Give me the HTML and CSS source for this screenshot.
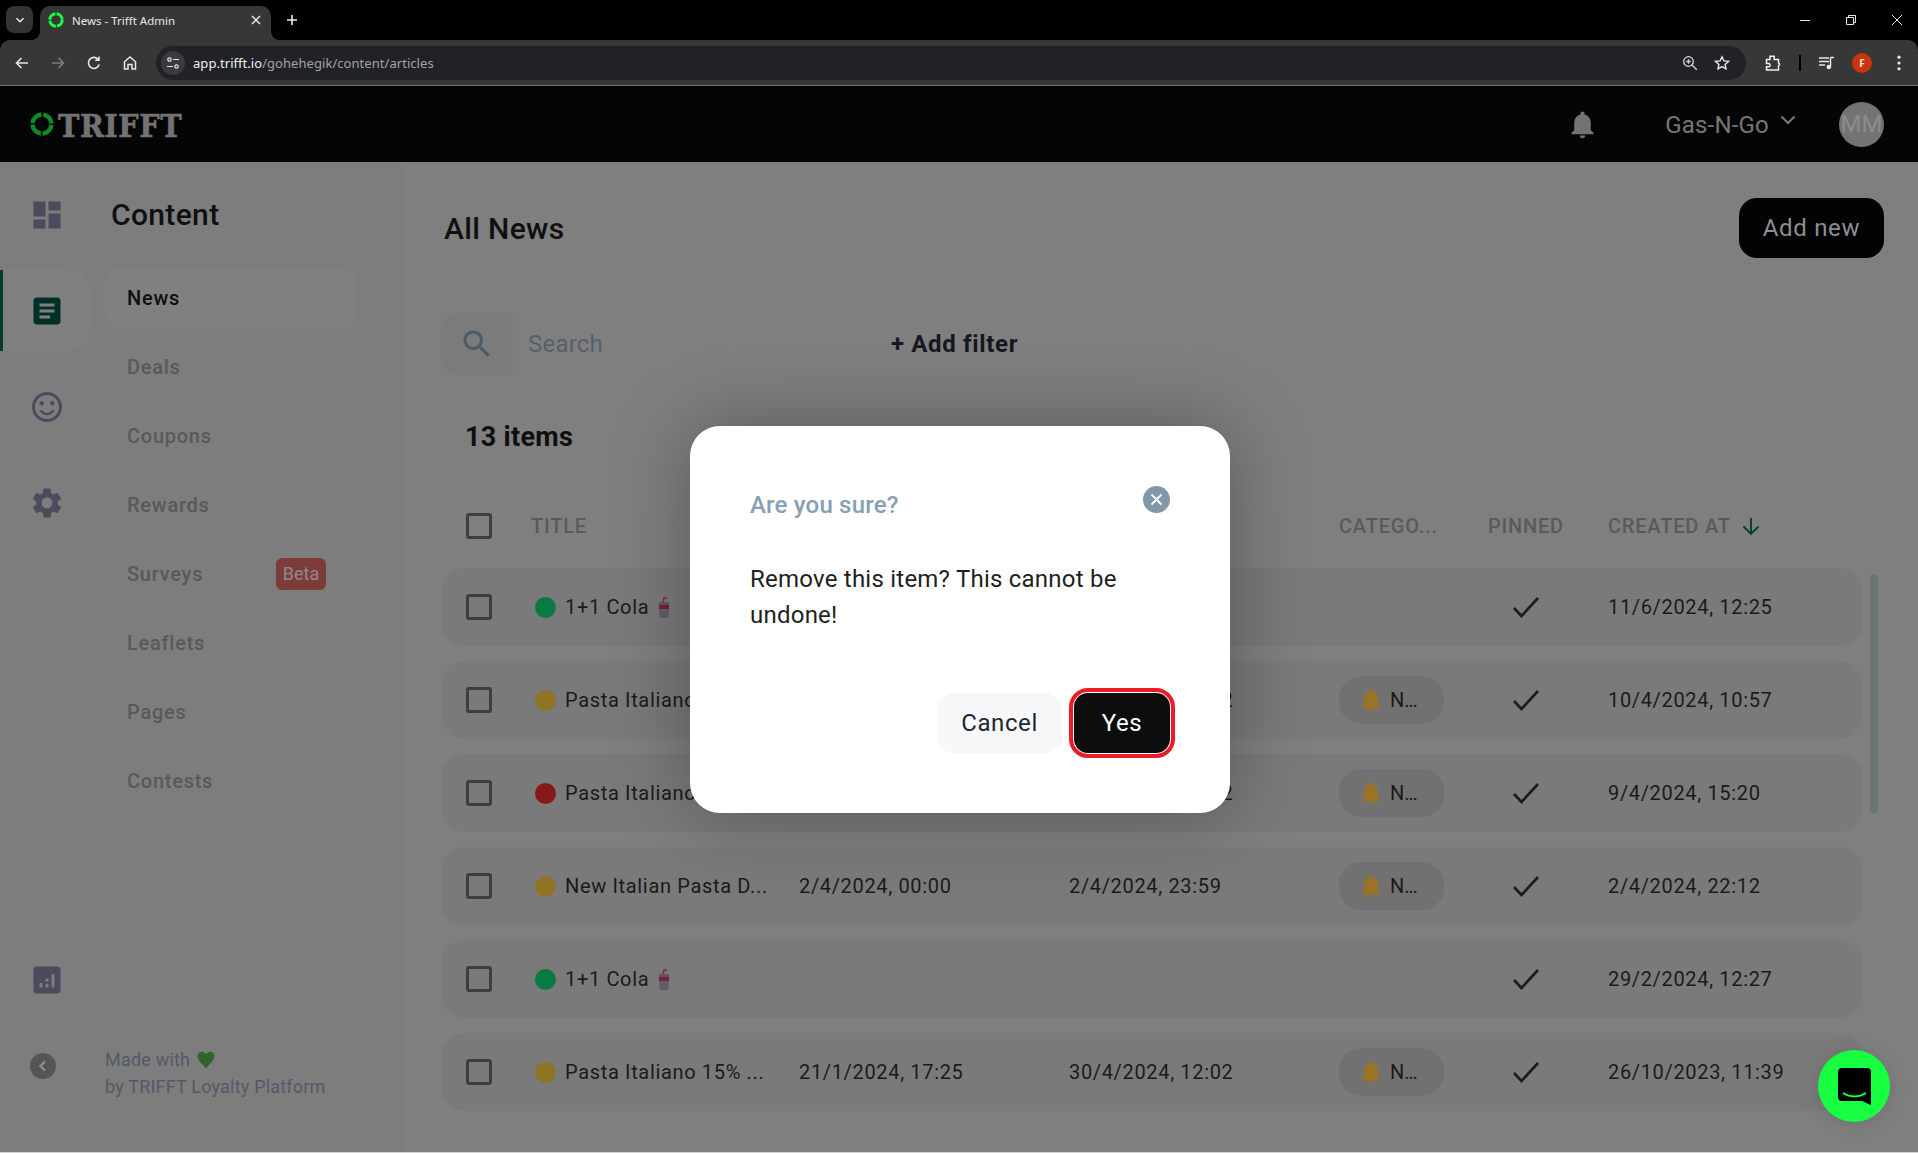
FILE: index.html
```html
<!DOCTYPE html>
<html lang="en">
<head>
<meta charset="utf-8">
<title>News - Trifft Admin</title>
<link rel="stylesheet" href="styles.css">
</head>
<body>
<div class="browser">
  <div class="tabstrip">
    <button class="tabsearch"><svg width="12" height="12" viewBox="0 0 12 12"><path d="M2.5 4.2 6 7.7l3.5-3.5" fill="none" stroke="#e8e8e8" stroke-width="1.6"/></svg></button>
    <div class="tab">
      <svg class="favicon" width="16" height="16" viewBox="0 0 16 16"><circle cx="8" cy="8" r="6.2" fill="none" stroke="#19ff41" stroke-width="3" stroke-dasharray="8.5 1.2"/></svg>
      <span class="tabtitle">News - Trifft Admin</span>
      <svg class="tabclose" width="10" height="10" viewBox="0 0 10 10"><path d="M1 1l8 8M9 1l-8 8" stroke="#e8e8e8" stroke-width="1.5"/></svg>
    </div>
    <svg class="newtab" width="12" height="12" viewBox="0 0 12 12"><path d="M6 1v10M1 6h10" stroke="#f0f0f0" stroke-width="1.6"/></svg>
    <div class="winctrls">
      <svg width="12" height="12" viewBox="0 0 12 12"><path d="M1 6.5h10" stroke="#e8e8e8"/></svg>
      <svg width="12" height="12" viewBox="0 0 12 12"><path d="M1.5 3.5h7v7h-7zM3.5 3.5v-2h7v7h-2" fill="none" stroke="#e8e8e8"/></svg>
      <svg width="12" height="12" viewBox="0 0 12 12"><path d="M1 1l10 10M11 1L1 11" stroke="#e8e8e8"/></svg>
    </div>
  </div>
  <div class="toolbar">
    <svg class="tbicon" width="16" height="16" viewBox="0 0 16 16"><path d="M14 8H2.5M7.5 3l-5 5 5 5" fill="none" stroke="#e8e8e8" stroke-width="1.6"/></svg>
    <svg class="tbicon" width="16" height="16" viewBox="0 0 16 16"><path d="M2 8h11.5M8.5 3l5 5-5 5" fill="none" stroke="#7c7c7c" stroke-width="1.6"/></svg>
    <svg class="tbicon" width="16" height="16" viewBox="0 0 16 16"><path d="M13.2 9.5A5.5 5.5 0 1 1 12 4.2M13 1.5V5.3H9.2" fill="none" stroke="#e8e8e8" stroke-width="1.6"/></svg>
    <svg class="tbicon" width="16" height="16" viewBox="0 0 16 16"><path d="M2.5 14V6.8L8 2l5.5 4.8V14H10V9.5H6V14z" fill="none" stroke="#e8e8e8" stroke-width="1.5"/></svg>
    <div class="omnibox">
      <span class="siteinfo"><svg width="14" height="14" viewBox="0 0 14 14"><circle cx="3.5" cy="3.5" r="1.7" fill="none" stroke="#e8e8e8" stroke-width="1.2"/><path d="M7 3.5h6M1 10.5h6" stroke="#e8e8e8" stroke-width="1.2"/><circle cx="10.5" cy="10.5" r="1.7" fill="none" stroke="#e8e8e8" stroke-width="1.2"/></svg></span>
      <span class="url"><span class="urlhost">app.trifft.io</span>/gohehegik/content/articles</span>
      <svg class="omni-zoom" width="16" height="16" viewBox="0 0 16 16"><circle cx="6.5" cy="6.5" r="4.8" fill="none" stroke="#d8d8d8" stroke-width="1.3"/><path d="M10 10l4.8 4.8M6.5 4.3v4.4M4.3 6.5h4.4" stroke="#d8d8d8" stroke-width="1.3"/></svg>
      <svg class="omni-star" width="16" height="16" viewBox="0 0 16 16"><path d="M8 1.8l1.9 4.1 4.5.5-3.3 3 .9 4.4L8 11.6l-4 2.2.9-4.4-3.3-3 4.5-.5z" fill="none" stroke="#e8e8e8" stroke-width="1.4"/></svg>
    </div>
    <div class="tbright">
      <svg width="18" height="18" viewBox="0 0 18 18"><path d="M2.5 5.500H6V2.200h4.200v3.300h4.300v3.200a1.600 1.600 0 0 1 0 3V16h-12v-3.200h2a1.600 1.600 0 0 0 0-3.200h-2z" fill="none" stroke="#f0f0f0" stroke-width="1.5"/></svg>
      <span class="tbsep"></span>
      <svg width="16" height="16" viewBox="0 0 16 16"><path d="M0 3h10M0 6.5h10M0 10h6" stroke="#e8e8e8" stroke-width="1.3"/><path d="M11.5 2.500v9" stroke="#e8e8e8" stroke-width="1.5"/><path d="M11.5 2.500H15" stroke="#e8e8e8" stroke-width="1.5"/><circle cx="9.8" cy="12" r="2.3" fill="#e8e8e8"/></svg>
      <span class="profile">F</span>
      <svg width="6" height="16" viewBox="0 0 6 16"><circle cx="3" cy="2.2" r="1.6" fill="#e8e8e8"/><circle cx="3" cy="8" r="1.6" fill="#e8e8e8"/><circle cx="3" cy="13.8" r="1.6" fill="#e8e8e8"/></svg>
    </div>
  </div>
</div>

<div class="app">
  <header class="appbar">
    <div class="logo">
      <svg width="24" height="24" viewBox="0 0 24 24"><circle cx="12" cy="12" r="9.5" fill="none" stroke="#0f8a2b" stroke-width="4.4" stroke-dasharray="13.2 1.7" stroke-dashoffset="-1"/></svg>
      <span class="logotext">TRIFFT</span>
    </div>
    <div class="appbar-right">
      <svg class="bell" width="33" height="33" viewBox="0 0 24 24"><path d="M12 22c1.100 0 2-.9 2-2h-4c0 1.100.9 2 2 2zm6-6v-5c0-3.070-1.630-5.640-4.500-6.320V4c0-.83-.67-1.500-1.500-1.500s-1.500.67-1.500 1.500v.68C7.640 5.360 6 7.920 6 11v5l-2 2v1h16v-1l-2-2z"/></svg>
      <span class="org">Gas-N-Go</span>
      <svg class="orgchev" width="18" height="12" viewBox="0 0 18 12"><path d="M2.500 2.500 9 9l6.500-6.500" fill="none" stroke="#767676" stroke-width="2.200"/></svg>
      <span class="avatar">MM</span>
    </div>
  </header>

  <div class="workspace">
    <aside class="sidebar">
      <nav class="rail">
        <a class="railitem"><svg width="36" height="36" viewBox="0 0 24 24"><path d="M3 13h8V3H3v10zm0 8h8v-6H3v6zm10 0h8V11h-8v10zm0-18v6h8V3h-8z"/></svg></a>
        <a class="railitem active"><svg width="36" height="36" viewBox="0 0 24 24"><path d="M19 3H5c-1.100 0-2 .9-2 2v14c0 1.100.9 2 2 2h14c1.100 0 2-.9 2-2V5c0-1.100-.9-2-2-2zm-5 14H7v-2h7v2zm3-4H7v-2h10v2zm0-4H7V7h10v2z"/></svg></a>
        <a class="railitem"><svg width="36" height="36" viewBox="0 0 24 24"><path d="M11.990 2C6.470 2 2 6.480 2 12s4.470 10 9.990 10C17.520 22 22 17.520 22 12S17.520 2 11.990 2zM12 20c-4.420 0-8-3.580-8-8s3.580-8 8-8 8 3.580 8 8-3.580 8-8 8zm3.500-9c.83 0 1.500-.67 1.500-1.500S16.330 8 15.500 8 14 8.670 14 9.500s.67 1.500 1.500 1.500zm-7 0c.83 0 1.500-.67 1.500-1.500S9.330 8 8.500 8 7 8.670 7 9.500 7.670 11 8.500 11zM12 16c-1.480 0-2.750-.81-3.450-2H6.880c.8 2.050 2.790 3.500 5.120 3.500s4.320-1.450 5.120-3.500h-1.670c-.7 1.190-1.970 2-3.450 2z"/></svg></a>
        <a class="railitem"><svg width="36" height="36" viewBox="0 0 24 24"><path d="M19.140 12.940c.04-.3.06-.61.06-.94 0-.32-.02-.64-.07-.94l2.030-1.580c.18-.14.23-.41.12-.61l-1.920-3.320c-.12-.22-.37-.29-.59-.22l-2.390.96c-.5-.38-1.030-.7-1.620-.94l-.36-2.540c-.04-.24-.24-.41-.48-.41h-3.840c-.24 0-.43.17-.47.41l-.36 2.540c-.59.24-1.130.57-1.620.94l-2.390-.96c-.22-.08-.47 0-.59.22L2.740 8.870c-.12.21-.08.47.12.61l2.030 1.580c-.05.3-.09.63-.09.94s.02.64.07.94l-2.030 1.580c-.18.14-.23.41-.12.61l1.920 3.320c.12.22.37.29.59.22l2.390-.96c.5.38 1.030.7 1.620.94l.36 2.54c.05.24.24.41.48.41h3.840c.24 0 .44-.17.47-.41l.36-2.540c.59-.24 1.130-.56 1.620-.94l2.390.96c.22.08.47 0 .59-.22l1.920-3.320c.12-.22.07-.47-.12-.61l-2.010-1.580zM12 15.600c-1.980 0-3.600-1.620-3.600-3.600s1.620-3.600 3.600-3.600 3.600 1.620 3.600 3.600-1.620 3.600-3.600 3.600z"/></svg></a>
        <a class="railitem railbottom"><svg width="36" height="36" viewBox="0 0 24 24"><path fill-rule="evenodd" d="M5 3h14c1.100 0 2 .9 2 2v14c0 1.100-.9 2-2 2H5c-1.100 0-2-.9-2-2V5c0-1.100.9-2 2-2zm2 11v3h2v-3H7zm4-3v2h2v-2h-2zm0 3.500V17h2v-2.500h-2zM15 8v9h2V8h-2z"/></svg></a>
        <button class="collapse"><svg width="14" height="14" viewBox="0 0 14 14"><path d="M9 2.500 4.500 7 9 11.500" fill="none" stroke="#8c8c8c" stroke-width="2.400"/></svg></button>
      </nav>
      <div class="subnav">
        <h2 class="subtitle">Content</h2>
        <ul class="sublist">
          <li class="subitem current">News</li>
          <li class="subitem">Deals</li>
          <li class="subitem">Coupons</li>
          <li class="subitem">Rewards</li>
          <li class="subitem">Surveys<span class="beta">Beta</span></li>
          <li class="subitem">Leaflets</li>
          <li class="subitem">Pages</li>
          <li class="subitem">Contests</li>
        </ul>
        <p class="madewith">Made with <svg class="heart" width="18" height="18" viewBox="0 0 18 18"><path d="M9 17.500C6 13.500.5 9.500.5 5.200.5 2.500 2.500.8 4.800.8c1.800 0 3.300 1 4.200 2.700C9.900 1.800 11.400.8 13.200.8c2.300 0 4.300 1.700 4.300 4.400 0 4.300-5.500 8.300-8.500 12.300z"/></svg><br>by TRIFFT Loyalty Platform</p>
      </div>
    </aside>

    <main class="content">
      <div class="titlebar">
        <h1 class="pagetitle">All News</h1>
        <button class="addnew">Add new</button>
      </div>
      <div class="filters">
        <span class="searchicon"><svg width="36" height="36" viewBox="0 0 24 24"><path d="M15.500 14h-.79l-.28-.27C15.410 12.590 16 11.110 16 9.500 16 5.910 13.090 3 9.500 3S3 5.910 3 9.500 5.910 16 9.500 16c1.610 0 3.090-.59 4.230-1.570l.27.28v.79l5 4.990L20.490 19l-4.990-5zm-6 0C7.010 14 5 11.990 5 9.500S7.010 5 9.500 5 14 7.010 14 9.500 11.990 14 9.500 14z"/></svg></span>
        <span class="searchtext">Search</span>
        <span class="addfilter">+ Add filter</span>
      </div>
      <div class="count">13 items</div>

      <div class="tablehead cols">
        <span class="box"></span>
        <span>TITLE</span>
        <span></span>
        <span></span>
        <span>CATEGO...</span>
        <span>PINNED</span>
        <span class="sorted">CREATED AT <svg width="20" height="20" viewBox="0 0 20 20"><path d="M10 2v15.500M2.500 10.500l7.500 7.500 7.500-7.500" fill="none" stroke="#0b3d2c" stroke-width="1.900"/></svg></span>
      </div>

      <div class="row cols">
        <span class="box"></span>
        <span class="ttl"><i class="dot green"></i>1+1 Cola <svg class="cup" width="14" height="21" viewBox="0 0 14 21"><path d="M6 5 7 1h3" fill="none" stroke="#8b2040" stroke-width="1.500"/><path d="M2 5h10v3H2z" fill="#5a5a66"/><path d="M2 8h10v4H2z" fill="#7d1c3c"/><path d="M2 12h10l-.8 9H2.800z" fill="#5f5f6b"/></svg></span>
        <span></span><span></span><span></span>
        <span class="pin"><svg width="28" height="24" viewBox="0 0 28 24"><path d="M2 13l7.500 8L26 3" fill="none" stroke="#1c1c1c" stroke-width="2.600"/></svg></span>
        <span>11/6/2024, 12:25</span>
      </div>
      <div class="row cols">
        <span class="box"></span>
        <span class="ttl"><i class="dot yellow"></i>Pasta Italiano 15% ...</span>
        <span>21/1/2024, 17:25</span>
        <span>30/4/2024, 12:02</span>
        <span class="chip"><svg width="28" height="28" viewBox="0 0 24 24"><path d="M12 22c1.100 0 2-.9 2-2h-4c0 1.100.9 2 2 2zm6-6v-5c0-3.070-1.630-5.640-4.500-6.320V4c0-.83-.67-1.500-1.500-1.500s-1.500.67-1.500 1.500v.68C7.640 5.360 6 7.920 6 11v5l-2 2v1h16v-1l-2-2z"/></svg>N…</span>
        <span class="pin"><svg width="28" height="24" viewBox="0 0 28 24"><path d="M2 13l7.500 8L26 3" fill="none" stroke="#1c1c1c" stroke-width="2.600"/></svg></span>
        <span>10/4/2024, 10:57</span>
      </div>
      <div class="row cols">
        <span class="box"></span>
        <span class="ttl"><i class="dot red"></i>Pasta Italiano 15% ...</span>
        <span>21/1/2024, 17:25</span>
        <span>30/4/2024, 12:02</span>
        <span class="chip"><svg width="28" height="28" viewBox="0 0 24 24"><path d="M12 22c1.100 0 2-.9 2-2h-4c0 1.100.9 2 2 2zm6-6v-5c0-3.070-1.630-5.640-4.500-6.320V4c0-.83-.67-1.500-1.500-1.500s-1.500.67-1.500 1.500v.68C7.640 5.360 6 7.920 6 11v5l-2 2v1h16v-1l-2-2z"/></svg>N…</span>
        <span class="pin"><svg width="28" height="24" viewBox="0 0 28 24"><path d="M2 13l7.500 8L26 3" fill="none" stroke="#1c1c1c" stroke-width="2.600"/></svg></span>
        <span>9/4/2024, 15:20</span>
      </div>
      <div class="row cols">
        <span class="box"></span>
        <span class="ttl"><i class="dot yellow"></i>New Italian Pasta D...</span>
        <span>2/4/2024, 00:00</span>
        <span>2/4/2024, 23:59</span>
        <span class="chip"><svg width="28" height="28" viewBox="0 0 24 24"><path d="M12 22c1.100 0 2-.9 2-2h-4c0 1.100.9 2 2 2zm6-6v-5c0-3.070-1.630-5.640-4.500-6.320V4c0-.83-.67-1.500-1.500-1.500s-1.500.67-1.500 1.500v.68C7.640 5.360 6 7.920 6 11v5l-2 2v1h16v-1l-2-2z"/></svg>N…</span>
        <span class="pin"><svg width="28" height="24" viewBox="0 0 28 24"><path d="M2 13l7.500 8L26 3" fill="none" stroke="#1c1c1c" stroke-width="2.600"/></svg></span>
        <span>2/4/2024, 22:12</span>
      </div>
      <div class="row cols">
        <span class="box"></span>
        <span class="ttl"><i class="dot green"></i>1+1 Cola <svg class="cup" width="14" height="21" viewBox="0 0 14 21"><path d="M6 5 7 1h3" fill="none" stroke="#8b2040" stroke-width="1.500"/><path d="M2 5h10v3H2z" fill="#5a5a66"/><path d="M2 8h10v4H2z" fill="#7d1c3c"/><path d="M2 12h10l-.8 9H2.800z" fill="#5f5f6b"/></svg></span>
        <span></span><span></span><span></span>
        <span class="pin"><svg width="28" height="24" viewBox="0 0 28 24"><path d="M2 13l7.500 8L26 3" fill="none" stroke="#1c1c1c" stroke-width="2.600"/></svg></span>
        <span>29/2/2024, 12:27</span>
      </div>
      <div class="row cols">
        <span class="box"></span>
        <span class="ttl"><i class="dot yellow"></i>Pasta Italiano 15% ...</span>
        <span>21/1/2024, 17:25</span>
        <span>30/4/2024, 12:02</span>
        <span class="chip"><svg width="28" height="28" viewBox="0 0 24 24"><path d="M12 22c1.100 0 2-.9 2-2h-4c0 1.100.9 2 2 2zm6-6v-5c0-3.070-1.630-5.640-4.500-6.320V4c0-.83-.67-1.500-1.500-1.500s-1.500.67-1.500 1.500v.68C7.640 5.360 6 7.920 6 11v5l-2 2v1h16v-1l-2-2z"/></svg>N…</span>
        <span class="pin"><svg width="28" height="24" viewBox="0 0 28 24"><path d="M2 13l7.500 8L26 3" fill="none" stroke="#1c1c1c" stroke-width="2.600"/></svg></span>
        <span>26/10/2023, 11:39</span>
      </div>
      <span class="scrollbar"></span>
    </main>
  </div>

  <div class="backdrop">
    <div class="dialog">
      <div class="dialoghead">
        <h3 class="dialogtitle">Are you sure?</h3>
        <button class="dialogclose"><svg width="13" height="13" viewBox="0 0 13 13"><path d="M1.500 1.500l10 10M11.500 1.500l-10 10" stroke="#fff" stroke-width="1.800"/></svg></button>
      </div>
      <p class="dialogbody">Remove this item? This cannot be undone!</p>
      <div class="dialogactions">
        <button class="btn cancel">Cancel</button>
        <button class="btn yes">Yes</button>
      </div>
    </div>
  </div>

  <button class="fab"><svg width="33" height="37" viewBox="0 0 33 37"><path d="M4 0h25a4 4 0 0 1 4 4v33l-9-4H4a4 4 0 0 1-4-4V4a4 4 0 0 1 4-4z" fill="#000"/><path d="M5 25c7 4.500 16 4.500 23 0" fill="none" stroke="#19ff41" stroke-width="2"/></svg></button>
</div>
</body>
</html>
```

FILE: styles.css
```css
* { box-sizing: border-box; }
html, body { margin: 0; padding: 0; }
body {
  width: 1918px;
  height: 1153px;
  overflow: hidden;
  background: #d4d4d4;
  font-family: Roboto, "Liberation Sans", sans-serif;
  color: #141414;
}
button { font-family: inherit; border: 0; padding: 0; }
h1, h2, h3, p, ul { margin: 0; padding: 0; }
ul { list-style: none; }

/* browser chrome */
.browser { height: 86px; background: #000; }
.tabstrip { height: 40px; display: flex; align-items: flex-start; padding: 6px 0 0 6px; }
.tabsearch { width: 27px; height: 27px; border-radius: 8px; background: #333; display: flex; align-items: center; justify-content: center; margin-right: 7px; }
.tab { width: 231px; height: 34px; background: #373737; border-radius: 10px 10px 0 0; display: flex; align-items: center; padding: 0 10px 6px 8px; position: relative; }
.tab::before, .tab::after { content: ""; position: absolute; bottom: 0; width: 8px; height: 8px; }
.tab::before { left: -8px; background: radial-gradient(circle at 0 0, #000 7.500px, #373737 8px); }
.tab::after { right: -8px; background: radial-gradient(circle at 100% 0, #000 7.500px, #373737 8px); }
.favicon { margin-right: 8px; flex: none; }
.tabtitle { font: 11.500px "Noto Sans", sans-serif; color: #e8e8e8; flex: 1; white-space: nowrap; }
.tabclose { flex: none; margin-right: 0; }
.newtab { margin: 8px 0 0 15px; }
.winctrls { margin-left: auto; display: flex; gap: 34px; padding: 8px 15px 0 0; }
.toolbar { height: 46px; background: #373737; border-radius: 10px 10px 0 0; border-bottom: 1px solid #6e6e6e; display: flex; align-items: center; padding: 0 0 0 14px; }
.tbicon { margin-right: 20px; flex: none; }
.omnibox { width: 1590px; height: 34px; margin-left: -2px; background: #212226; border-radius: 17px; display: flex; align-items: center; padding: 0 16px 0 5px; }
.siteinfo { width: 24px; height: 24px; border-radius: 50%; background: #3a3b3e; display: flex; align-items: center; justify-content: center; margin-right: 8px; flex: none; }
.url { font: 13px "Noto Sans", sans-serif; letter-spacing: .05px; color: #a3a3a3; flex: 1; white-space: nowrap; }
.urlhost { color: #f0f0f0; }
.omni-zoom { margin-right: 16px; }
.tbright { display: flex; align-items: center; margin-left: 18px; }
.tbsep { width: 2px; height: 16px; background: #000; margin: 0 18px 0 17px; }
.profile { width: 20px; height: 20px; border-radius: 50%; background: #c8360f; color: #f5e0d8; font: 700 10px "Noto Sans", sans-serif; display: flex; align-items: center; justify-content: center; margin: 0 24px 0 17px; }

/* app */
.app { position: relative; height: 1066px; background: #7f7f7f; display: flex; flex-direction: column; }
.appbar { height: 76px; background: #050505; display: flex; align-items: center; justify-content: space-between; padding: 0 0 0 30px; flex: none; }
.logo { display: flex; align-items: center; gap: 4px; }
.logotext { font: 700 32px/1 "DejaVu Serif", serif; font-stretch: condensed; letter-spacing: .5px; color: #737373; -webkit-text-stroke: .5px #737373; padding-top: 3px; }
.appbar-right { display: flex; align-items: center; padding-right: 34px; }
.bell { fill: #737373; margin-right: 66px; }
.org { font-size: 24px; letter-spacing: .2px; color: #767676; padding-top: 2px; }
.orgchev { margin: -8px 0 0 10px; }
.avatar { width: 45px; height: 45px; border-radius: 50%; background: #737373; color: #8c8c8c; font-size: 24px; display: flex; align-items: center; justify-content: center; margin-left: 42px; }

.workspace { flex: 1; display: flex; min-height: 0; }
.sidebar { width: 405px; background: #7d7d7d; display: flex; flex: none; }
.rail { width: 105px; display: flex; flex-direction: column; gap: 15px; padding-top: 12px; flex: none; padding-bottom: 73px; }
.railitem { width: 90px; height: 81px; display: flex; align-items: center; justify-content: center; fill: #4b4b5e; border-left: 3px solid transparent; border-radius: 0 22px 22px 0; }
.railitem svg { margin-left: 1px; }
.railitem.active { background: #808080; border-left-color: #063a2a; fill: #023028; }
.railbottom { margin-top: auto; }
.collapse { width: 26px; height: 26px; border-radius: 50%; background: #555; margin: 18px 0 0 30px; display: flex; align-items: center; justify-content: center; flex: none; }

.subnav { flex: 1; display: flex; flex-direction: column; padding: 35px 0 52px; min-width: 0; }
.subtitle { font-size: 30px; font-weight: 500; letter-spacing: .35px; line-height: 36px; margin-left: 6px; color: #101010; }
.sublist { margin-top: 34px; display: flex; flex-direction: column; gap: 7px; width: 252px; }
.subitem { height: 62px; border-radius: 18px; padding: 0 31px 0 22px; display: flex; align-items: center; justify-content: space-between; font-size: 20px; font-weight: 500; letter-spacing: .75px; color: #595959; }
.subitem.current { background: #808080; color: #0f0f0f; }
.beta { width: 50px; height: 32px; border-radius: 6px; background: #7d3c3a; color: #8f8a8a; font-size: 18px; font-weight: 400; letter-spacing: 0; padding-bottom: 2px; display: flex; align-items: center; justify-content: center; }
.madewith { margin-top: auto; font-size: 18px; line-height: 27px; letter-spacing: .2px; color: #525a68; }
.heart { fill: #2f642b; vertical-align: -3px; margin-left: 2px; }

.content { flex: 1; position: relative; padding: 36px 34px 0 36px; min-width: 0; overflow: hidden; }
.titlebar { display: flex; align-items: center; justify-content: space-between; height: 60px; padding-left: 3px; }
.pagetitle { font-size: 30px; font-weight: 500; letter-spacing: .35px; color: #101010; }
.addnew { width: 145px; height: 60px; border-radius: 18px; background: #030303; color: #8c8f92; font-size: 24px; letter-spacing: .7px; }
.filters { margin-top: 55px; height: 62px; display: flex; align-items: center; }
.searchicon { width: 72px; height: 62px; background: #7b7b7b; border-radius: 18px 0 0 18px; display: flex; align-items: center; justify-content: center; fill: #4e5a66; }
.searchtext { font-size: 24px; letter-spacing: .2px; color: #56606c; margin-left: 15px; width: 363px; }
.addfilter { font-size: 24px; font-weight: 700; letter-spacing: .65px; color: #15181e; }
.count { margin-top: 44px; padding-left: 24px; font-size: 27px; font-weight: 700; letter-spacing: .3px; line-height: 36px; color: #0f0f0f; }

.cols { display: grid; grid-template-columns: 65px 268px 270px 270px 149px 120px 1fr; align-items: center; padding-left: 25px; width: 1422px; }
.tablehead { margin-top: 51px; height: 40px; font-size: 20px; font-weight: 500; letter-spacing: .8px; color: #5a5a5a; }
.sorted { display: flex; align-items: center; gap: 10px; }
.box { width: 26px; height: 26px; border: 3px solid #3e3e3e; border-radius: 3px; display: block; }
.row { height: 78px; background: #7a7a7a; border-radius: 24px; font-size: 20px; letter-spacing: .66px; color: #1a1a1a; margin-bottom: 15px; white-space: nowrap; }
.tablehead + .row { margin-top: 22px; }
.ttl { display: flex; align-items: center; }
.dot { width: 21px; height: 21px; border-radius: 50%; margin: 0 9px 0 4px; flex: none; }
.dot.green { background: #0a7a45; }
.dot.yellow { background: #8e7424; }
.dot.red { background: #87191b; }
.cup { margin-left: 8px; }
.chip { width: 105px; height: 48px; border-radius: 22px; background: #717171; display: flex; align-items: center; padding-left: 18px; gap: 5px; letter-spacing: 0; fill: #9a7424; }
.pin { padding-left: 24px; display: flex; }
.scrollbar { position: absolute; left: 1465px; top: 412px; width: 8px; height: 240px; border-radius: 4px; background: #6b7578; }

/* dialog */
.backdrop { position: absolute; inset: 0; display: flex; align-items: center; justify-content: center; padding-left: 2px; }
.dialog { width: 540px; height: 387px; background: #fff; border-radius: 30px; padding: 60px; box-shadow: 0 0 80px rgba(0,0,0,.3); display: flex; flex-direction: column; }
.dialoghead { display: flex; justify-content: space-between; height: 38px; }
.dialogtitle { font-size: 24px; font-weight: 500; letter-spacing: .2px; line-height: 38px; color: #85a0b4; }
.dialogclose { width: 27px; height: 27px; border-radius: 50%; background: #8197aa; display: flex; align-items: center; justify-content: center; }
.dialogbody { margin-top: 37px; font-size: 24px; letter-spacing: .23px; line-height: 36px; color: #1f1f1f; }
.dialogactions { margin-top: auto; display: flex; justify-content: flex-end; gap: 12px; }
.btn { height: 60px; font-size: 24px; letter-spacing: .6px; }
.cancel { width: 125px; border-radius: 18px; background: #f7f8fa; color: #1c2733; }
.yes { width: 96px; border-radius: 14px; background: #0d0d0d; color: #fff; outline: 4.500px solid #ed1c24; outline-offset: 1px; }

.fab { position: absolute; left: 1818px; top: 964px; width: 72px; height: 72px; border-radius: 50%; background: #19ff41; box-shadow: 0 2px 20px rgba(0,0,0,.12); display: flex; align-items: center; justify-content: center; }
```
